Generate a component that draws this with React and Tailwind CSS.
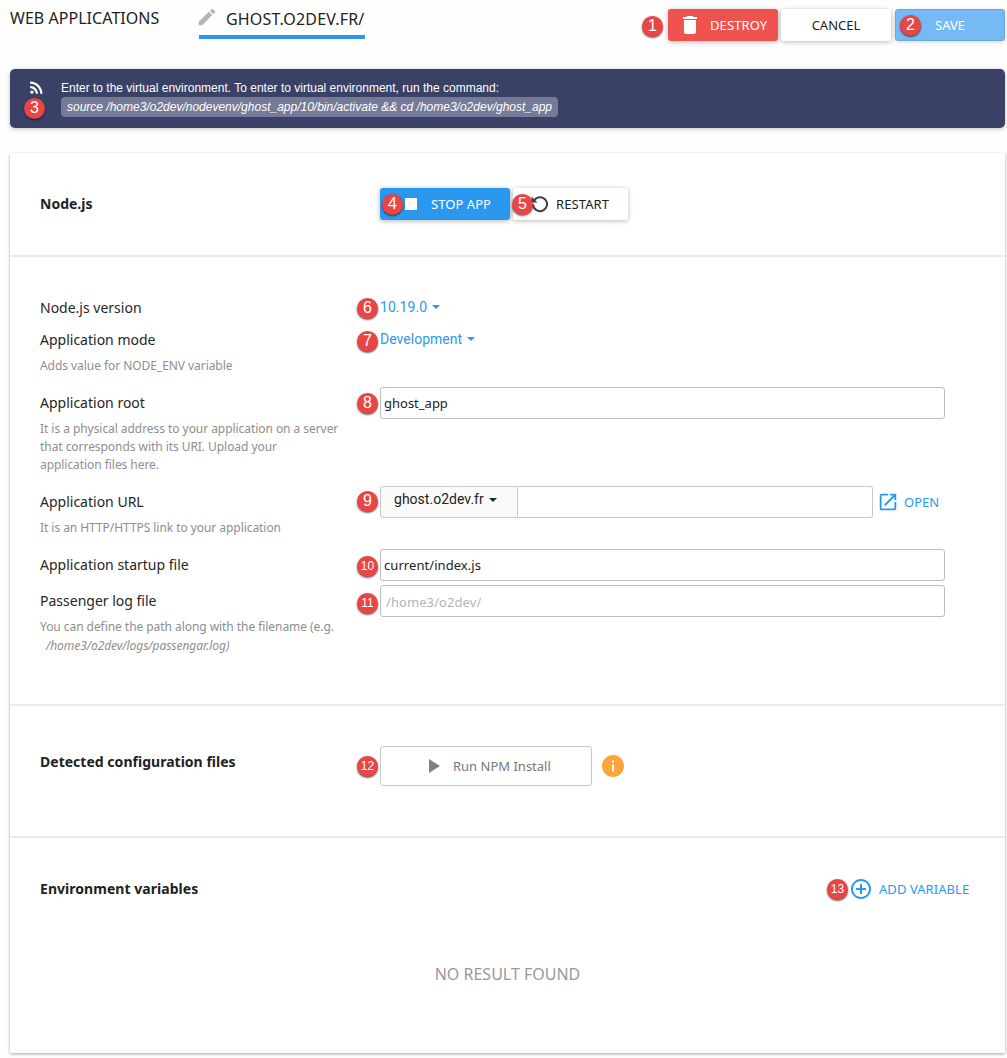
import { MdModeEdit, MdDelete, MdOpenInNew, MdPlayArrow, MdRssFeed, MdControlPoint } from "react-icons/md";

const noto = "font-['Noto_Sans',sans-serif]";

function Badge({ n, className }) {
  return (
    <span
      className={`absolute z-10 flex size-[21px] items-center justify-center rounded-full bg-[#e84545] pb-px font-['Liberation_Sans',sans-serif] leading-none text-white shadow-[0_1px_2px_rgba(0,0,0,0.65)] ${n > 9 ? "text-[12px]" : "text-[16px]"} ${className}`}
    >
      {n}
    </span>
  );
}

function Caret() {
  return <span className="ml-[5px] inline-block border-x-4 border-t-4 border-x-transparent border-t-current align-middle" />;
}

function Row({ label, hint, height, children }) {
  return (
    <div className={`flex ${height}`}>
      <div className="w-[340px] shrink-0">
        <div className="text-[14px] leading-8 text-[#262626]">{label}</div>
        <div className="mt-px text-[12px] leading-[18px] tracking-[-0.055px] whitespace-nowrap text-[#8e8e8e]">{hint}</div>
      </div>
      <div className="relative h-8 w-[565px]">{children}</div>
    </div>
  );
}

const field = "block h-8 w-full rounded-[3px] border border-[#bdbdbd] bg-white text-[13px] text-[#222] outline-none placeholder:text-[#b3b3b3]";

export default function App() {
  return (
    <div className={`h-[1058px] w-[1007px] overflow-hidden bg-[#fefefe] pl-[10px] text-[#222] ${noto}`}>
      <header className="flex h-[69px] items-start">
        <h1 className="mt-[7px] w-[189px] text-[16px] leading-[22px] tracking-[0.04px] whitespace-nowrap">WEB APPLICATIONS</h1>
        <div className="flex h-[39px] w-[166px] shrink-0 border-b-4 border-[#2b98f0] whitespace-nowrap">
          <MdModeEdit className="mt-[6px] -ml-[3px] size-[22px] shrink-0 text-[#b5b5b9]" />
          <span className="mt-2 ml-2 text-[16px] leading-[22px] tracking-[0.18px]">GHOST.O2DEV.FR/</span>
        </div>
        <div className="relative mt-[9px] ml-[303px] flex text-[13px]">
          <Badge n={1} className="top-[7px] -left-[26px]" />
          <button className="flex h-8 w-[110px] items-center rounded-[3px] bg-[#ef5350] pl-[10px] text-white shadow-[0_1px_5px_rgba(0,0,0,0.28)]">
            <MdDelete className="size-[24px]" />
            <span className="mt-px ml-2 tracking-[0.1px]">DESTROY</span>
          </button>
          <button className="ml-[3px] h-8 w-[110px] rounded-[3px] bg-white pt-px shadow-[0_1px_5px_rgba(0,0,0,0.28)]">CANCEL</button>
          <button className="relative ml-1 h-8 w-[110px] rounded-[3px] border border-[#69a8df] bg-[#75baf5] pt-px text-white shadow-[0_1px_4px_rgba(0,0,0,0.15)]">
            <Badge n={2} className="top-[5px] left-[4px]" />
            SAVE
          </button>
        </div>
      </header>

      <section className="relative flex h-[59px] w-[995px] rounded-[5px] bg-[#394166] font-['Liberation_Sans',sans-serif] text-[12px] text-white shadow-[0_1px_4px_rgba(0,0,0,0.25)]">
        <MdRssFeed className="mt-[9px] ml-[17px] size-[19px]" />
        <Badge n={3} className="top-[29px] left-[14px]" />
        <div className="mt-[11px] ml-[15px]">
          <p className="leading-[16px]">Enter to the virtual environment. To enter to virtual environment, run the command:</p>
          <code className="mt-px block h-5 w-[497px] rounded-[4px] bg-[#757b97] pl-[6px] font-['Liberation_Sans',sans-serif] leading-[20px] whitespace-nowrap italic">
            source /home3/o2dev/nodevenv/ghost_app/10/bin/activate &amp;&amp; cd /home3/o2dev/ghost_app
          </code>
        </div>
      </section>

      <main className="mt-[25px] h-[900px] w-[995px] bg-white shadow-[0_1px_3px_rgba(0,0,0,0.35)]">
        <section className="flex h-[104px] items-center border-b-2 border-[#ececec] pl-[30px]">
          <h2 className="-mt-[2px] w-[340px] text-[14px] font-bold">Node.js</h2>
          <div className="relative flex text-[13px]">
            <Badge n={4} className="top-[6px] left-[2px]" />
            <button className="flex h-8 w-[130px] items-center rounded-[3px] bg-[#2b98f0] pl-[25px] text-white shadow-[0_1px_5px_rgba(0,0,0,0.3)]">
              <span className="size-3 bg-white" />
              <span className="mt-px ml-[14px] tracking-[0.06px]">STOP APP</span>
            </button>
            <button className="ml-[3px] flex h-8 w-[115px] items-center rounded-[3px] bg-white pl-[18px] shadow-[0_1px_5px_rgba(0,0,0,0.28)]">
              <svg viewBox="0 0 18 18" className="size-[18px]" fill="none" stroke="#424242" strokeWidth="2">
                <path d="M3.2 5.2A7 7 0 1 1 2 9.4" />
                <path d="M.5 1.5v6h6z" fill="#424242" stroke="none" />
              </svg>
              <span className="mt-px ml-[7px] tracking-[0.1px]">RESTART</span>
            </button>
            <Badge n={5} className="top-[6px] left-[132px]" />
          </div>
        </section>

        <section className="h-[449px] border-b-2 border-[#ececec] pt-[35px] pl-[30px]">
          <Row label="Node.js version" height="h-8">
            <Badge n={6} className="top-[6px] -left-[23px]" />
            <a className="flex items-center font-['Roboto',sans-serif] text-[14px] leading-[30px] tracking-[0.05px] text-[#2b98f0]">10.19.0<Caret /></a>
          </Row>
          <Row label="Application mode" hint="Adds value for NODE_ENV variable" height="h-[63px]">
            <Badge n={7} className="top-[7px] -left-[23px]" />
            <a className="flex items-center font-['Roboto',sans-serif] text-[14px] leading-[30px] tracking-[0.02px] text-[#2b98f0]">Development<Caret /></a>
          </Row>
          <Row
            label="Application root"
            hint={<>It is a physical address to your application on a server<br />that corresponds with its URI. Upload your<br />application files here.</>}
            height="h-[99px]"
          >
            <Badge n={8} className="top-[6px] -left-[23px]" />
            <input className={`${field} pl-[3px]`} defaultValue="ghost_app" />
          </Row>
          <Row label="Application URL" hint="It is an HTTP/HTTPS link to your application" height="h-[63px]">
            <Badge n={9} className="top-[5px] -left-[23px]" />
            <div className="flex">
              <button className="flex h-8 w-[138px] items-center rounded-l-[3px] border border-[#c8c8c8] bg-[#fafafa] pb-[5px] pl-[13px] font-['Roboto',sans-serif] text-[14px] tracking-[0.02px]">ghost.o2dev.fr<Caret /></button>
              <input className="h-8 w-[355px] rounded-r-[3px] border border-l-0 border-[#c8c8c8] bg-white outline-none" />
              <a className="ml-[4px] flex h-8 items-center text-[13px] text-[#2b98f0]">
                <MdOpenInNew className="size-[22px]" />
                <span className="mt-px ml-[5px]">OPEN</span>
              </a>
            </div>
          </Row>
          <Row label="Application startup file" height="h-9">
            <Badge n={10} className="top-[7px] -left-[23px]" />
            <input className={`${field} pl-[3px] tracking-[0.06px]`} defaultValue="current/index.js" />
          </Row>
          <Row
            label="Passenger log file"
            hint={<>You can define the path along with the filename (e.g.<br /><i className="ml-[6px] leading-5">/home3/o2dev/logs/passengar.log)</i></>}
            height="h-20"
          >
            <Badge n={11} className="top-[8px] -left-[23px]" />
            <input className={`${field} pt-[2px] pl-[5px] tracking-[0.08px]`} placeholder="/home3/o2dev/" />
          </Row>
        </section>

        <section className="flex h-[132px] items-start border-b-2 border-[#ececec] pt-10 pl-[30px]">
          <h2 className="w-[340px] text-[14px] leading-8 font-bold tracking-[0.02px]">Detected configuration files</h2>
          <div className="relative flex items-center">
            <Badge n={12} className="top-[10px] -left-[23px]" />
            <button className="flex h-10 w-[212px] items-center rounded-[3px] border border-[#c8c8c8] bg-white pl-[40px] text-[13px] text-[#777]">
              <MdPlayArrow className="size-6 text-[#808080]" />
              <span className="mt-px ml-[8px]">Run NPM Install</span>
            </button>
            <svg viewBox="0 0 22 22" className="ml-[10px] size-[22px]">
              <circle cx="11" cy="11" r="11" fill="#ffa43a" />
              <path d="M10 5.4h2v2h-2zM10 9.6h2v7h-2z" fill="#fff" />
            </svg>
          </div>
        </section>

        <section className="pt-[34px] pl-[30px]">
          <div className="flex h-8 items-center">
            <h2 className="w-[787px] text-[14px] font-bold tracking-[0.04px]">Environment variables</h2>
            <a className="relative mt-[2px] flex items-center pl-[22px] text-[13px] text-[#2b98f0]">
              <Badge n={13} className="top-[2px] left-0" />
              <MdControlPoint className="size-[24px]" />
              <span className="mt-px ml-[6px] tracking-[0.06px]">ADD VARIABLE</span>
            </a>
          </div>
          <p className="mt-[59px] w-[935px] text-center text-[16px] leading-[22px] text-[#999]">NO RESULT FOUND</p>
        </section>
      </main>
    </div>
  );
}
